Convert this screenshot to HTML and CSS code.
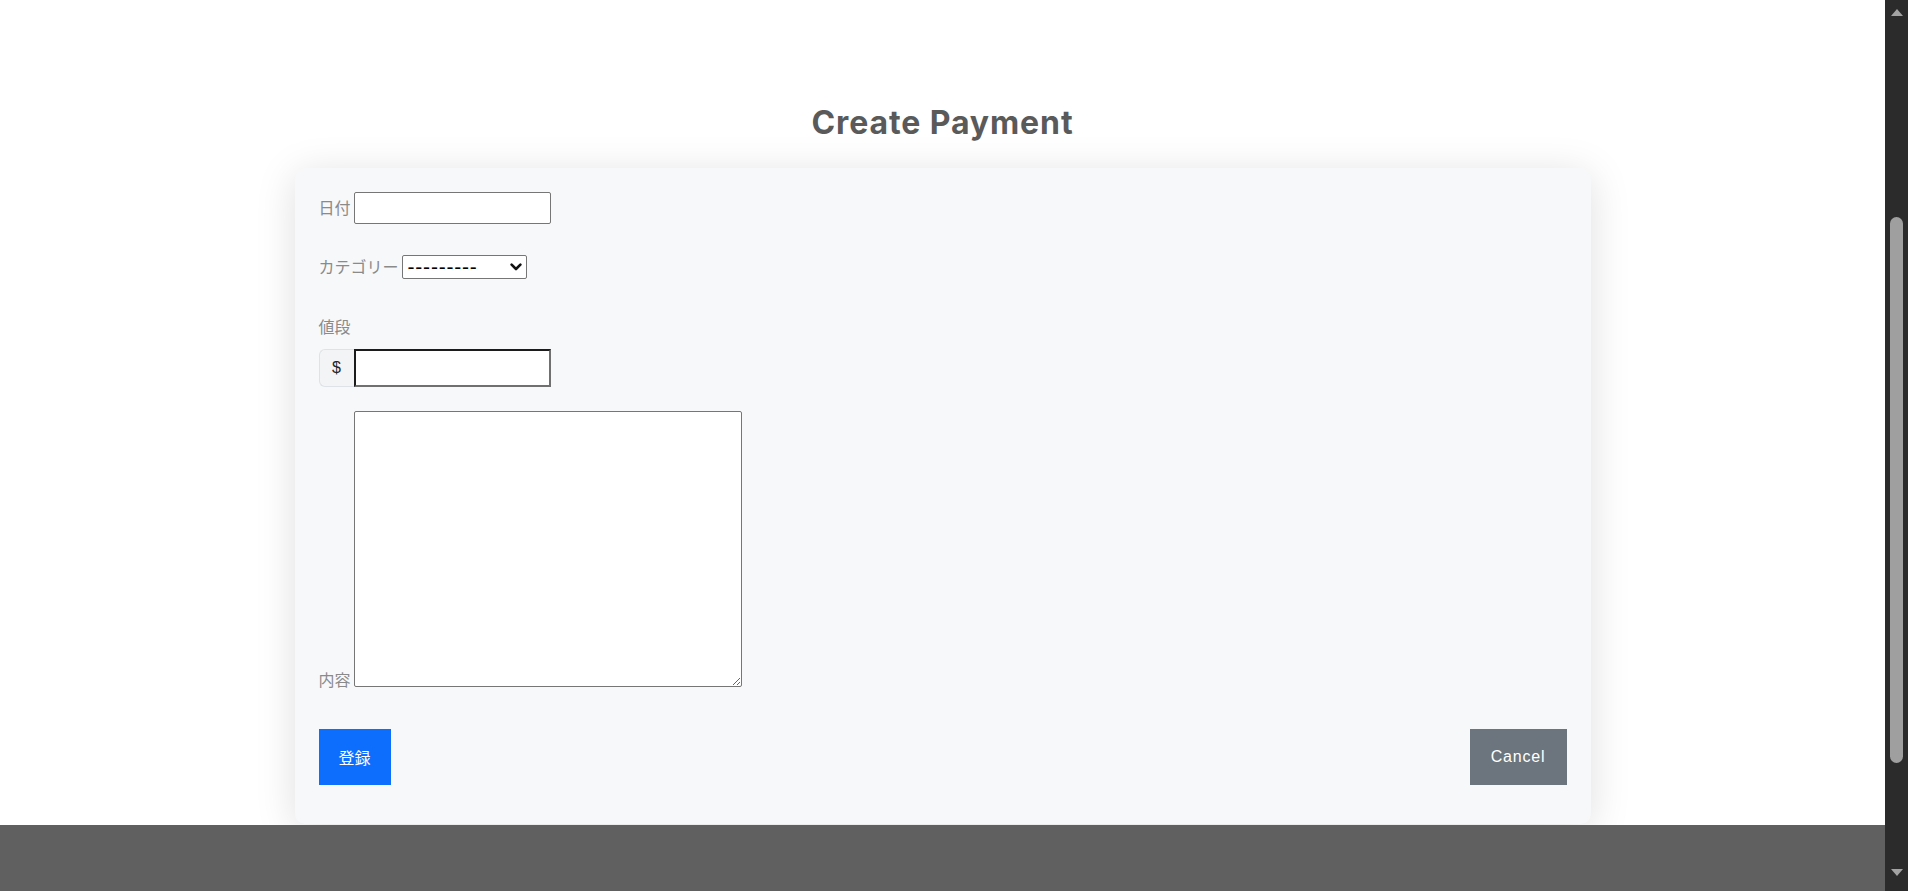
FILE: index.html
```html
<!DOCTYPE html>
<html lang="ja">
<head>
    <meta charset="UTF-8">
    <meta name="viewport" content="width=device-width, initial-scale=1.0">
    <title>Create Payment</title>
    <link rel="stylesheet" href="styles.css">
</head>
<body>

    <div class="page">
        <main class="content">
            <h1>Create Payment</h1>

            <form class="card">
                <div class="row">
                    <label for="date">日付</label>
                    <input type="text" id="date" class="date-input">
                </div>

                <div class="row row-category">
                    <label for="category">カテゴリー</label>
                    <span class="select-wrap">
                        <select id="category">
                            <option>---------</option>
                        </select>
                        <svg class="chevron" width="12" height="8" viewBox="0 0 12 8"><path d="M1.6 1.6 L6 6 L10.4 1.6" fill="none" stroke="#111" stroke-width="2.6" stroke-linecap="round" stroke-linejoin="round"/></svg>
                    </span>
                </div>

                <label class="block-label" for="price">値段</label>
                <div class="input-group">
                    <span class="addon">$</span>
                    <input type="text" id="price" class="price-input">
                </div>

                <div class="row row-memo">
                    <label for="memo">内容</label>
                    <textarea id="memo"></textarea>
                </div>

                <div class="actions">
                    <button type="button" class="btn btn-primary">登録</button>
                    <button type="button" class="btn btn-secondary">Cancel</button>
                </div>
            </form>
        </main>

        <footer class="footer"></footer>
    </div>

    <div class="scrollbar">
        <span class="arrow arrow-up"></span>
        <div class="thumb"></div>
        <span class="arrow arrow-down"></span>
    </div>

</body>
</html>
```

FILE: styles.css
```css
html, body { margin: 0; height: 100%; }
body { display: flex; background: #fff; font-family: "Liberation Sans", "Noto Sans CJK JP", sans-serif; font-size: 16px; overflow: hidden; }

.page { flex: 1; display: flex; flex-direction: column; height: 891px; }
.content { flex: 1; padding-top: 103px; }

h1 { margin: 0 0 25px; text-align: center; font-family: Inter, "Liberation Sans", sans-serif; font-weight: 700; font-size: 32px; line-height: 40px; color: #5a5a5a; letter-spacing: 0.9px; }

.card { box-sizing: border-box; width: 1296px; margin: 0 auto 1px; padding: 24px 24px 39px; background: #f7f8fa; border-radius: 10px; box-shadow: 0 6px 40px rgba(0,0,0,0.13); }

label { color: #8a8a8a; font-family: "Noto Sans CJK JP", sans-serif; font-size: 16px; line-height: 24px; }

.row { display: flex; align-items: center; gap: 3px; }
.row label { position: relative; top: -1px; }
.row-category { margin-top: 31px; }
.row-memo { margin-top: 24px; align-items: flex-end; }
.row-memo label { line-height: 16px; top: 0; }

.date-input { box-sizing: border-box; width: 197px; height: 32px; border: 1px solid #767676; border-radius: 2px; background: #fff; margin: 0; }

.select-wrap { position: relative; display: inline-block; }
select { appearance: none; -webkit-appearance: none; box-sizing: border-box; width: 125px; height: 24px; margin: 0; padding: 0 0 0 5px; border: 1px solid #767676; border-radius: 2px; background: #fff; color: #000; font-family: "Liberation Sans", sans-serif; font-size: 21px; line-height: 20px; letter-spacing: 0.8px; }
.chevron { position: absolute; right: 5px; top: 8px; pointer-events: none; }

.block-label { display: block; margin-top: 35px; margin-bottom: 11px; }

.input-group { display: flex; height: 38px; }
.addon { box-sizing: border-box; width: 35px; display: flex; align-items: center; justify-content: center; background: #f3f4f6; border: 1px solid #dfe2e6; border-right: none; border-radius: 6px 0 0 6px; color: #212529; font-size: 16px; }
.price-input { box-sizing: border-box; width: 197px; height: 38px; margin: 0; border-style: solid; border-width: 2px; border-color: #1c1c1c #707070 #707070 #1c1c1c; background: #fff; }

textarea { box-sizing: border-box; width: 388px; height: 276px; margin: 0; border: 1px solid #767676; border-radius: 2px; background: #fff; resize: both; }

.actions { display: flex; justify-content: space-between; margin-top: 42px; }
.btn { height: 56px; padding: 0 20px; border: none; color: #fff; font-size: 16px; cursor: pointer; }
.btn-primary { background: #0d6efd; font-family: "Noto Sans CJK JP", sans-serif; }
.btn-secondary { background: #6c757d; min-width: 97px; font-family: "Liberation Sans", sans-serif; letter-spacing: 0.8px; }

.footer { height: 66px; background: #606060; }

.scrollbar { width: 23px; height: 891px; background: #2b2b2b; display: flex; flex-direction: column; align-items: center; }
.arrow { width: 0; height: 0; border-left: 6px solid transparent; border-right: 6px solid transparent; }
.arrow-up { margin-top: 9px; border-bottom: 7px solid #a3a3a3; }
.arrow-down { margin-top: 106px; border-top: 7px solid #a3a3a3; }
.thumb { width: 13px; height: 546px; margin-top: 201px; background: #9f9f9f; border-radius: 7px; }
```
